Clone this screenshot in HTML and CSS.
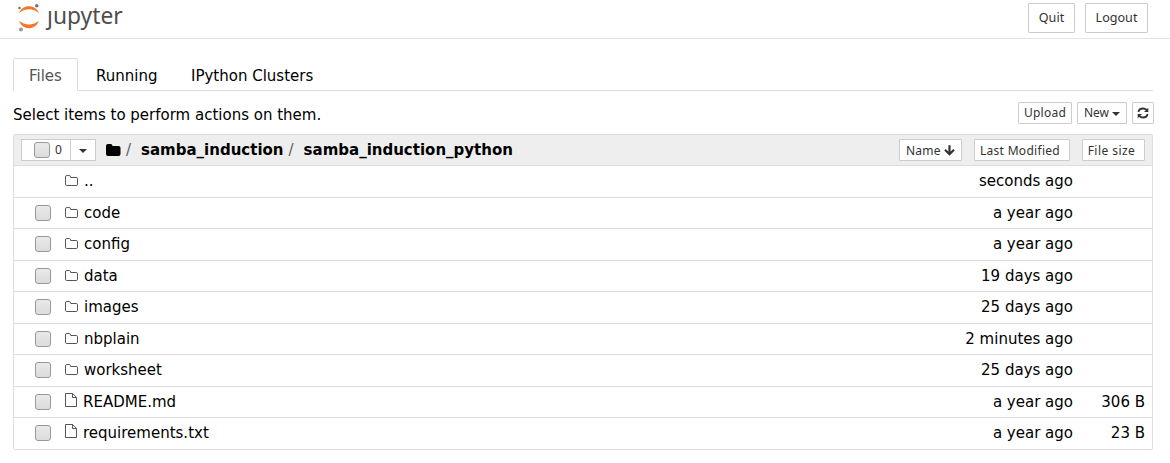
FILE: index.html
```html
<!DOCTYPE html>
<html lang="en">
<head>
<meta charset="utf-8">
<title>Jupyter</title>
<link rel="stylesheet" href="styles.css">
</head>
<body>
<svg class="defs" width="0" height="0">
  <symbol id="folder" viewBox="0 0 14 12"><path d="M.5 2Q.5 .5 1.8 .5H4.4Q5.5 .5 5.7 2.5H11.2Q12.5 2.5 12.5 3.8V9.2Q12.5 10.5 11.2 10.5H1.8Q.5 10.5 .5 9.2Z" fill="none" stroke="#555"/></symbol>
  <symbol id="file" viewBox="0 0 13 15"><path d="M.5 .5H7.7L11.5 4.4V13.5H.5ZM7.5 .5V4.5H11.5" fill="none" stroke="#555"/></symbol>
</svg>
<header class="header">
  <a class="logo">
    <svg width="24" height="31" viewBox="0 0 24 31">
      <path d="M1.2 12.2C3.8 3 18.2 3 20.8 12.2C15.6 7 6.4 7 1.2 12.2ZM1.2 19.8C3.8 29.6 18.2 29.6 20.8 19.8C15.6 24.6 6.4 24.6 1.2 19.8Z" fill="#f37726"/>
      <circle cx="1.5" cy="7" r="1.3" fill="#777"/><circle cx="18.8" cy="4.8" r="1.8" fill="#777"/><circle cx="3" cy="28.6" r="2" fill="#999"/>
    </svg>
    <span class="wordmark">ȷupyter</span>
  </a>
  <button class="btn quit">Quit</button>
  <button class="btn logout">Logout</button>
</header>
<main class="main">
  <nav class="tabs"><a class="tab active">Files</a><a class="tab running">Running</a><a class="tab clusters">IPython Clusters</a></nav>
  <div class="toolbar">
    <span class="hint">Select items to perform actions on them.</span>
    <button class="btn sm upload">Upload</button>
    <button class="btn sm new">New <i class="caret"></i></button>
    <button class="btn sm refresh"><svg width="12" height="12" viewBox="0 0 12 12"><path d="M1.4 5Q2 1.5 6 1.5Q8.2 1.5 9.8 3.2M10.6 7Q10 10.5 6 10.5Q3.8 10.5 2.2 8.8" fill="none" stroke="#333" stroke-width="1.8"/><path d="M11.3 .7V5H7ZM.7 11.3V7H5Z" fill="#333"/></svg></button>
  </div>
  <section class="list">
    <div class="list-head">
      <div class="select"><span class="select-all"><i class="check"></i>0</span><span class="drop"><i class="caret"></i></span></div>
      <svg class="home" width="15" height="12" viewBox="0 0 15 12"><path d="M0 2Q0 0 2 0H4.5Q6.5 0 6.5 2H12.5Q14.5 2 14.5 4V10Q14.5 12 12.5 12H2Q0 12 0 10Z" fill="#000"/></svg>
      <span class="slash">/</span><b class="crumb">samba_induction</b><span class="slash two">/</span><b class="crumb">samba_induction_python</b>
      <button class="btn sm sort name">Name <svg width="11" height="11" viewBox="0 0 11 11"><path d="M5.5 .2V9M1 4.8L5.5 9.3L10 4.8" fill="none" stroke="#333" stroke-width="2.2"/></svg></button>
      <button class="btn sm sort modified">Last Modified</button>
      <button class="btn sm sort size">File size</button>
    </div>
    <div class="row"><i class="check hidden"></i><svg class="icon"><use href="#folder"/></svg><span class="label">..</span><span class="time">seconds ago</span><span class="bytes"></span></div>
    <div class="row"><i class="check"></i><svg class="icon"><use href="#folder"/></svg><span class="label">code</span><span class="time">a year ago</span><span class="bytes"></span></div>
    <div class="row"><i class="check"></i><svg class="icon"><use href="#folder"/></svg><span class="label">config</span><span class="time">a year ago</span><span class="bytes"></span></div>
    <div class="row"><i class="check"></i><svg class="icon"><use href="#folder"/></svg><span class="label">data</span><span class="time">19 days ago</span><span class="bytes"></span></div>
    <div class="row"><i class="check"></i><svg class="icon"><use href="#folder"/></svg><span class="label">images</span><span class="time">25 days ago</span><span class="bytes"></span></div>
    <div class="row"><i class="check"></i><svg class="icon"><use href="#folder"/></svg><span class="label">nbplain</span><span class="time">2 minutes ago</span><span class="bytes"></span></div>
    <div class="row"><i class="check"></i><svg class="icon"><use href="#folder"/></svg><span class="label">worksheet</span><span class="time">25 days ago</span><span class="bytes"></span></div>
    <div class="row"><i class="check"></i><svg class="icon doc"><use href="#file"/></svg><span class="label">README.md</span><span class="time">a year ago</span><span class="bytes">306 B</span></div>
    <div class="row"><i class="check"></i><svg class="icon doc"><use href="#file"/></svg><span class="label">requirements.txt</span><span class="time">a year ago</span><span class="bytes">23 B</span></div>
  </section>
</main>
</body>
</html>
```
FILE: styles.css
```css
* { box-sizing: border-box; }
body { margin: 0; height: 463px; overflow: hidden; background: #fff; color: #000; font: 15px/20px "DejaVu Sans", sans-serif; }
.defs { display: block; }
svg { flex: none; }
.header { display: flex; height: 39px; border-bottom: 1px solid #e4e4e4; padding: 0 22px 0 18px; align-items: flex-start; }
.logo { display: flex; margin-right: auto; }
.logo svg { margin-top: 1px; }
.wordmark { font: 22.8px/32px "Noto Sans", sans-serif; color: #4e4e4e; margin-left: 5px; }
.btn { display: flex; align-items: center; justify-content: center; padding: 0; background: #fff; border: 1px solid #ccc; border-radius: 1px; color: #333; font: 12.6px/18px "Noto Sans", sans-serif; height: 30px; white-space: pre; }
.quit { width: 47px; margin: 3px 10px 0 0; }
.logout { width: 63px; margin-top: 3px; }
.main { padding: 19px 17px 0 13px; }
.tabs { display: flex; height: 33px; border-bottom: 1px solid #ddd; }
.tab { height: 33px; line-height: 20px; padding-top: 8px; }
.active { width: 65px; border: 1px solid #ddd; border-bottom-color: #fff; border-radius: 2px 2px 0 0; padding: 7px 0 0 15px; color: #555; }
.running { margin-left: 18px; width: 95px; }
.toolbar { display: flex; height: 43px; padding-top: 11px; margin-right: -1px; }
.hint { margin: 3px auto 0 0; }
.sm { height: 22px; font-size: 12px; letter-spacing: .25px; }
.upload { width: 54px; margin-right: 5px; }
.new { width: 50px; margin-right: 5px; letter-spacing: 0; }
.refresh { width: 22px; }
.caret { display: inline-block; border: 4px solid transparent; border-top-color: #333; border-bottom: 0; margin-top: 2px; }
.list { border: 1px solid #ddd; border-radius: 2px; height: 316px; }
.list-head { display: flex; align-items: center; height: 31px; background: #eee; border-bottom: 1px solid #ddd; padding: 0 7px; }
.select { display: flex; width: 75px; height: 22px; background: #fff; border: 1px solid #ccc; margin-right: 10px; font: 12px/20px "Noto Sans", sans-serif; color: #333; }
.select-all { display: flex; align-items: center; width: 49px; padding-left: 12px; gap: 5px; border-right: 1px solid #ccc; }
.drop { display: flex; align-items: center; justify-content: center; flex: 1; }
.check { flex: none; width: 16px; height: 16px; border: 1px solid #999; border-radius: 3px; background: linear-gradient(#e9e9e9, #dcdcdc); }
.hidden { visibility: hidden; }
.slash { color: #5e5e5e; margin: 0 10px 0 5px; }
.two { margin-left: 5px; }
.crumb { font-size: 15px; }
.sort { padding-top: 2px; }
.name { width: 63px; margin: 0 12px 0 auto; }
.name svg { margin-top: -1px; }
.modified { width: 96px; margin-right: 12px; padding-right: 4px; letter-spacing: .3px; }
.size { width: 63px; padding-right: 4px; letter-spacing: .45px; }
.row { display: flex; align-items: center; height: 31.5px; border-bottom: 1px solid #ddd; padding: 0 7px 0 21px; }
.row:last-child { height: 30px; border-bottom: 0; }
.icon { width: 14px; height: 12px; margin: 0 5px 0 14px; }
.doc { width: 13px; height: 15px; margin-top: -3px; }
.label { margin-right: auto; }
.bytes { width: 72px; text-align: right; }
```
